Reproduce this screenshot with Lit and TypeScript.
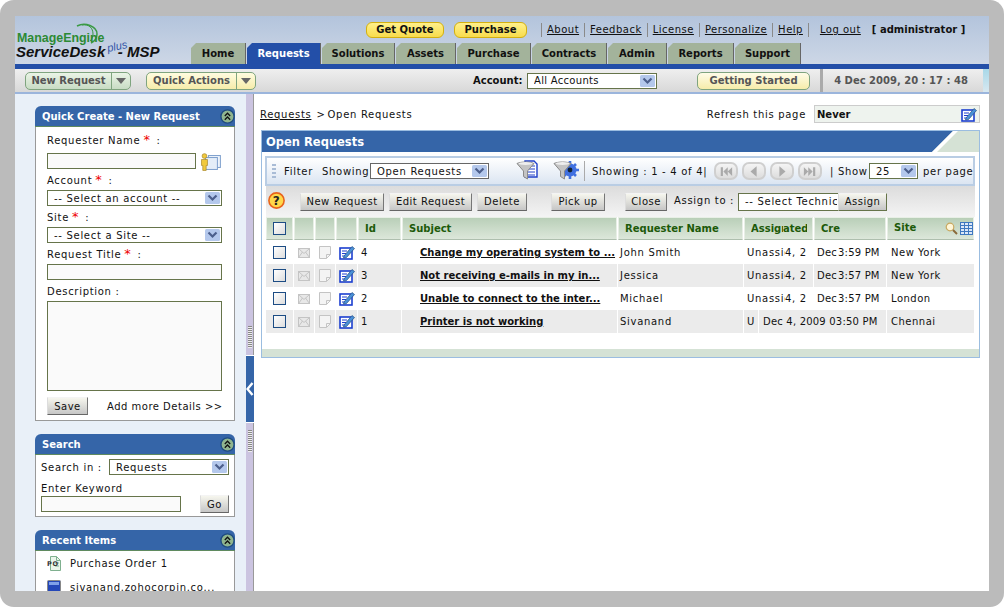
import { LitElement, css, html, svg } from 'lit';
import { customElement } from 'lit/decorators.js';

const TABS = ['Home', 'Requests', 'Solutions', 'Assets', 'Purchase', 'Contracts', 'Admin', 'Reports', 'Support'];
const LINKS = ['About', 'Feedback', 'License', 'Personalize', 'Help'];

const ROWS = [
  { id: 4, subject: 'Change my operating system to ...', name: 'John Smith', time: '3:59 PM', site: 'New York' },
  { id: 3, subject: 'Not receiving e-mails in my in...', name: 'Jessica', time: '3:57 PM', site: 'New York' },
  { id: 2, subject: 'Unable to connect to the inter...', name: 'Michael', time: '3:57 PM', site: 'London' },
  { id: 1, subject: 'Printer is not working', name: 'Sivanand', time: '', site: 'Chennai' },
];

const caret = svg`<svg width="15" height="12" viewBox="0 0 15 12"><rect width="15" height="12" rx="1.5" fill="#b4c8ec"/><path d="M3.5 3.5 7.5 7.5 11.5 3.5" fill="none" stroke="#4c5f8c" stroke-width="2.2"/></svg>`;

const collapse = svg`<svg width="15" height="15" viewBox="0 0 15 15"><circle cx="7.5" cy="7.5" r="6.6" fill="#8fb58f" stroke="#1f4c80" stroke-width="1.4"/><path d="M4.8 7 7.5 4.2 10.2 7M4.8 10.8 7.5 8 10.2 10.8" fill="none" stroke="#111" stroke-width="1.3"/></svg>`;

const mail = svg`<svg width="12" height="10" viewBox="0 0 12 10"><rect x=".5" y=".5" width="11" height="9" fill="#e8e8e8" stroke="#c4c4c4"/><path d="M.5.5 6 5.5 11.5.5M.5 9.5 4.5 4M11.5 9.5 7.5 4" fill="none" stroke="#c4c4c4"/></svg>`;

const note = svg`<svg width="12" height="13" viewBox="0 0 12 13"><path d="M.5.5h11v8l-4 4h-7z" fill="#f4f4f4" stroke="#c4c4c4"/><path d="M7.5 12.5v-4h4" fill="none" stroke="#c4c4c4"/></svg>`;

const editIcon = svg`<svg width="16" height="15" viewBox="0 0 16 15"><rect x="1" y="3" width="12" height="11" fill="#fff" stroke="#1c3fd0" stroke-width="1.6"/><path d="M3 6h5M3 8.5h4M3 11h3" stroke="#1c3fd0"/><path d="M5 11 13 1.5l2.5 2L7.5 12.5 4.5 13z" fill="#4a90d8" stroke="#26507e" stroke-width=".7"/></svg>`;

const funnel = svg`<path d="M1 3.5C5 1.5 14 1.5 18 3.5L11.5 11v8l-4-2.5V11z" fill="#c4c4c4" stroke="#8a8a8a"/><ellipse cx="9.5" cy="3.5" rx="7" ry="1.4" fill="#eee"/>`;

const funnelDoc = svg`<svg width="22" height="21" viewBox="0 0 22 21"><path d="M9 1h9l3 3v13H9z" fill="#fff" stroke="#1f3fc8" stroke-width="1.4"/><path d="M12 6h7M12 9h7M12 12h7M12 15h7" stroke="#1f3fc8"/>${funnel}</svg>`;

const funnelGear = svg`<svg width="26" height="21" viewBox="0 0 26 21"><circle cx="17" cy="10" r="6.5" fill="#3f6fe0"/><path d="M17 1v18M8 10h18M11 4l12 12M23 4 11 16" stroke="#3f6fe0" stroke-width="2.6"/><circle cx="17" cy="10" r="2.4" fill="#123"/>${funnel}</svg>`;

const pickIcon = svg`<svg width="22" height="18" viewBox="0 0 22 18"><rect x="8.5" y="2.5" width="12" height="12" fill="#eef4fb" stroke="#7d9fcd"/><rect x="5.5" y="4.5" width="12" height="12" fill="#e4edf8" stroke="#7d9fcd"/><circle cx="4.5" cy="3" r="2.4" fill="#f0c93c" stroke="#a8872a" stroke-width=".7"/><path d="M1.5 6.5h6v6H6.2v5H2.8v-5H1.5z" fill="#f0c93c" stroke="#a8872a" stroke-width=".7"/></svg>`;

const poIcon = svg`<svg width="14" height="15" viewBox="0 0 14 15"><path d="M3.5.5h6l4 4v10h-10z" fill="#eaf5ea" stroke="#7fb08f"/><path d="M9.5.5v4h4M8 7h4M8 10h4" fill="none" stroke="#7fb08f"/><text x="0" y="10" font-size="6.5" font-family="DejaVu Sans" font-weight="bold" fill="#333">PO</text></svg>`;

const pcIcon = svg`<svg width="14" height="15" viewBox="0 0 14 15"><rect x=".5" y=".5" width="13" height="11" rx="1" fill="#2447b8" stroke="#888"/><rect x="2" y="2" width="10" height="3" fill="#7fa0e8"/><rect x="1" y="12" width="12" height="2.5" fill="#aaa"/></svg>`;

const gridIcon = svg`<svg width="13" height="13" viewBox="0 0 13 13"><rect x=".5" y=".5" width="12" height="12" fill="#dce8f8" stroke="#3f78c0"/><path d="M.5 3.5h12M.5 6.5h12M.5 9.5h12M4.5.5v12M8.5.5v12" stroke="#3f78c0"/></svg>`;

const lens = svg`<svg width="13" height="13" viewBox="0 0 13 13"><circle cx="5" cy="5" r="3.8" fill="#fff6d8" stroke="#c8a860" stroke-width="1.2"/><path d="M8 8l4 4" stroke="#8a6a3a" stroke-width="2"/></svg>`;

const helpIcon = svg`<svg width="17" height="17" viewBox="0 0 17 17"><circle cx="8.5" cy="8.5" r="7.6" fill="#ffd84a" stroke="#e8641c" stroke-width="1.6"/><text x="8.5" y="13" text-anchor="middle" font-size="12" font-weight="bold" font-family="DejaVu Sans" fill="#222">?</text></svg>`;

const navIcons = [
  'M2 1h2.5v10H2zM10 1 5 6l5 5zM15 1l-5 5 5 5z',
  'M11 0 4 6l7 6z',
  'M5 0l7 6-7 6z',
  'M1 1l5 5-5 5zM6 1l5 5-5 5zM11.5 1H14v10h-2.5z',
];

@customElement('app-root')
export class AppRoot extends LitElement {
  static styles = css`
    :host {
      display: block;
      width: 1004px;
      height: 607px;
      background: #fff;
      font-family: 'DejaVu Sans', Verdana, sans-serif;
      font-size: 10px;
      letter-spacing: 0.7px;
      color: #111;
      overflow: hidden;
    }

    .shell {
      height: 607px;
      box-sizing: border-box;
      background: #bbb;
      border-radius: 14px;
      padding: 16px 15px;
    }

    .frame {
      height: 575px;
      background: #fff;
      overflow: hidden;
    }

    .header {
      display: flex;
      height: 48px;
      background: linear-gradient(#b3c4dc, #cdd7e6);
    }

    .logo {
      width: 176px;
      flex: none;
      position: relative;
      letter-spacing: 0;
    }

    .logo svg {
      position: absolute;
      left: 60px;
      top: 6px;
    }

    .me {
      position: absolute;
      left: 2px;
      top: 15px;
      color: #2c8a34;
      font: bold 12.4px 'Liberation Sans', sans-serif;
    }

    .sd {
      position: absolute;
      left: 1px;
      top: 27px;
      font: italic bold 15px 'Liberation Sans', sans-serif;
      color: #111;
      white-space: nowrap;
    }

    .plus {
      position: absolute;
      left: 92px;
      top: 24px;
      color: #3456a8;
      font: italic 11px 'Liberation Sans', sans-serif;
      transform: rotate(-12deg);
    }

    .top {
      display: flex;
      align-items: center;
      height: 27px;
      padding-left: 175px;
      white-space: nowrap;
    }

    .gold {
      height: 16px;
      box-sizing: border-box;
      border: 1px solid #d4b010;
      border-radius: 6px;
      background: linear-gradient(#fff08a, #f8dc4c);
      font-weight: bold;
      font-size: 10px;
      letter-spacing: 0;
      display: flex;
      align-items: center;
      justify-content: center;
    }

    .quote { width: 78px; margin-right: 10px; }
    .buy { width: 73px; margin-right: 14px; }

    .link {
      text-decoration: underline;
      padding: 0 5px;
      border-left: 1px solid #8a8a8a;
      line-height: 14px;
      letter-spacing: 0.5px;
    }

    .sep-end {
      border-left: 1px solid #8a8a8a;
      height: 14px;
      margin-right: 11px;
    }

    .logout { text-decoration: underline; margin-right: 11px; letter-spacing: 0.5px; }
    .who { font-weight: bold; letter-spacing: 0; }

    .tabs {
      display: grid;
      grid-template-columns: 55px 74px 73px 60px 74px 75px 59px 66px 66px;
      column-gap: 1px;
      height: 21px;
    }

    .tab {
      background: #a3b39b;
      border-right: 1px solid #666;
      display: flex;
      align-items: center;
      justify-content: center;
      font-weight: bold;
      font-size: 10px;
      letter-spacing: 0;
      clip-path: polygon(5px 0, 100% 0, 100% 100%, 0 100%, 0 5px);
    }

    .tab.on {
      background: #234fa8;
      color: #fff;
    }

    .strip {
      height: 5px;
      background: #234fa8;
    }

    .sub {
      display: flex;
      align-items: center;
      height: 25px;
      box-sizing: border-box;
      padding-left: 10px;
      background: linear-gradient(#efefef, #d8d8d8);
      border-bottom: 2px solid #9bb5dc;
      white-space: nowrap;
    }

    .pill {
      height: 18px;
      box-sizing: border-box;
      display: flex;
      align-items: center;
      border: 1px solid #7fa47f;
      border-radius: 5px;
      color: #555;
      font-weight: bold;
      font-size: 10px;
      letter-spacing: 0;
    }

    .pill b {
      flex: 1;
      text-align: center;
    }

    .pill i {
      width: 18px;
      height: 100%;
      border-left: 1px solid #7fa47f;
      display: flex;
      align-items: center;
      justify-content: center;
    }

    .pill i::after {
      content: '';
      border: 5px solid transparent;
      border-top: 6px solid #666;
      border-bottom: 0;
    }

    .green { width: 106px; margin-right: 15px; background: linear-gradient(#eaf4e6, #c8dcc4); }
    .cream { width: 110px; margin-right: 217px; background: linear-gradient(#fffce0, #f6ecaa); }
    .start { width: 113px; margin-right: 10px; background: linear-gradient(#fffce8, #f6ecaa); justify-content: center; }

    .acct {
      font-weight: bold;
      letter-spacing: 0;
      margin-right: 3px;
      width: 51px;
    }

    .date {
      width: 163px;
      height: 100%;
      border-left: 3px solid #aaa;
      box-sizing: border-box;
      display: flex;
      align-items: center;
      justify-content: center;
      padding-right: 4px;
      color: #555;
      font-weight: bold;
      letter-spacing: 0;
    }

    .edge {
      flex: 1;
      height: 100%;
      background: linear-gradient(#a8d8e8, #d8e8f0);
    }

    .select {
      height: 16px;
      box-sizing: border-box;
      border: 1px solid #66744a;
      background: #fff;
      display: flex;
      align-items: center;
      padding: 0 1px 0 6px;
      white-space: nowrap;
      flex: none;
    }

    .select span {
      flex: 1;
      overflow: hidden;
    }

    .select svg { flex: none; }

    .w-acct { width: 130px; margin-right: 40px; }
    .w-acct span { letter-spacing: 0.3px; }

    .body {
      display: flex;
      height: 497px;
    }

    .side {
      width: 231px;
      flex: none;
      box-sizing: border-box;
      padding: 12px 11px 0 20px;
      background: #e9f0f8;
      overflow: hidden;
    }

    .box {
      margin-bottom: 13px;
    }

    .box-head {
      height: 21px;
      background: #3565a8;
      border-radius: 6px 6px 0 0;
      border-bottom: 1px solid #5f8a5f;
      box-sizing: border-box;
      color: #fff;
      font-weight: bold;
      letter-spacing: 0;
      display: flex;
      align-items: center;
      justify-content: space-between;
      padding: 0 0 0 7px;
    }

    .box-body {
      background: #fff;
      border: 1px solid #999;
      border-top: 0;
      box-sizing: border-box;
    }

    .quick { height: 294px; padding: 6px 12px 0 11px; }
    .finder { height: 62px; padding: 4px 5px 0 5px; }
    .recent { height: 60px; padding: 0 0 0 11px; }

    .lbl {
      height: 14px;
      line-height: 16px;
      margin-bottom: 3px;
      white-space: nowrap;
    }

    .lbl em {
      color: #e00;
      font-style: normal;
      font-size: 13px;
      margin: 0 6px 0 3px;
      line-height: 10px;
    }

    .field { margin-bottom: 4px; }

    .text {
      display: block;
      height: 16px;
      box-sizing: border-box;
      border: 1px solid #66744a;
      background: #fafafa;
    }

    .name-row {
      display: flex;
      gap: 4px;
      align-items: flex-start;
      height: 16px;
      margin-bottom: 4px;
      margin-top: 6px;
    }

    .name-row .text { width: 150px; }
    .area { height: 90px; margin-bottom: 6px; }

    .btn {
      height: 18px;
      box-sizing: border-box;
      border: 1px solid;
      border-color: #f4f4f4 #777 #666 #ddd;
      background: linear-gradient(#f6f6ee, #c6c6c6);
      display: flex;
      align-items: center;
      justify-content: center;
      white-space: nowrap;
      flex: none;
      letter-spacing: 0.5px;
    }

    .save-row {
      display: flex;
      align-items: center;
      letter-spacing: 0.5px;
      white-space: nowrap;
    }

    .save { width: 41px; margin-right: 19px; }

    .find-row {
      display: flex;
      align-items: center;
      height: 16px;
      margin-bottom: 8px;
    }

    .find-row span.in { width: 68px; }
    .w-find { width: 120px; }
    .key { line-height: 12px; }

    .go-row {
      display: flex;
      align-items: flex-start;
      justify-content: space-between;
    }

    .go-row .text { width: 140px; margin-top: 1px; }
    .go { width: 29px; }

    .item {
      display: flex;
      align-items: center;
      gap: 9px;
      height: 24px;
      white-space: nowrap;
    }

    .split {
      width: 8px;
      flex: none;
      box-sizing: border-box;
      background: #cbc4e0;
      border-right: 1px solid #999;
      display: flex;
      flex-direction: column;
      align-items: center;
      padding-top: 232px;
    }

    .grip {
      width: 4px;
      height: 22px;
      background: repeating-linear-gradient(#888 0 1px, #eee 1px 2px);
    }

    .handle {
      width: 8px;
      height: 66px;
      margin: 7px 0;
      background: #3565a8;
      border-top: 1px solid #fff;
      border-bottom: 1px solid #fff;
      display: flex;
      align-items: center;
      flex: none;
    }

    .main {
      flex: 1;
      min-width: 0;
      padding: 0 9px 0 7px;
    }

    .crumb {
      display: flex;
      align-items: center;
      height: 36px;
      box-sizing: border-box;
      padding: 4px 0 0 0;
      margin-left: -1px;
      white-space: nowrap;
    }

    .crumb u { margin-right: 5px; }
    .crumb .gap { margin: 0 2px 0 0; }
    .refresh { margin-left: auto; margin-right: 8px; }

    .never {
      width: 166px;
      height: 18px;
      box-sizing: border-box;
      border: 1px solid #ccc;
      background: #eef3ee;
      font-weight: bold;
      letter-spacing: 0;
      display: flex;
      align-items: center;
      justify-content: space-between;
      padding: 0 2px;
    }

    .panel {
      border: 1px solid #9bbde0;
      height: 228px;
      box-sizing: border-box;
      position: relative;
    }

    .title {
      height: 21px;
      background: #3565a8;
      color: #fff;
      font-weight: bold;
      font-size: 11.5px;
      letter-spacing: 0;
      display: flex;
      align-items: center;
      justify-content: space-between;
      padding-left: 4px;
    }

    .title svg { flex: none; }

    .inner { padding: 4px 4px 0 3px; }

    .bar {
      display: flex;
      align-items: center;
      height: 30px;
      box-sizing: border-box;
      border: 2px solid #b9cde4;
      background: linear-gradient(#fff, #dbe5f2);
      white-space: nowrap;
      overflow: hidden;
    }

    .dots {
      width: 4px;
      height: 14px;
      margin: 0 8px 0 5px;
      background: repeating-linear-gradient(#a9bcd6 0 2px, transparent 2px 4px);
      flex: none;
    }

    .bar .filter { width: 38px; flex: none; }
    .bar .showing { width: 48px; flex: none; }
    .w-open { width: 119px; margin-right: 27px; border-color: #666; }
    .fun1 { margin-right: 15px; flex: none; }
    .fun2 { margin-right: 5px; flex: none; }

    .vr {
      width: 1px;
      height: 20px;
      background: #aaa;
      margin-right: 7px;
      flex: none;
    }

    .count { width: 122px; flex: none; }

    .nav {
      width: 24px;
      height: 18px;
      box-sizing: border-box;
      margin-right: 4px;
      border: 2px solid #cfcfcf;
      border-radius: 7px;
      background: linear-gradient(#f4f4f4, #ddd);
      display: flex;
      align-items: center;
      justify-content: center;
      flex: none;
    }

    .show { margin: 0 0 0 4px; width: 39px; flex: none; }
    .w-page { width: 49px; margin-right: 5px; }

    .acts {
      display: flex;
      align-items: center;
      height: 31px;
      margin-left: 1px;
      padding-left: 2px;
      background: linear-gradient(#dcdcdc, #f4f4f4);
      white-space: nowrap;
    }

    .help { margin-right: 15px; flex: none; }
    .a1 { width: 84px; margin-right: 5px; }
    .a2 { width: 83px; margin-right: 5px; }
    .a3 { width: 50px; margin-right: 24px; }
    .a4 { width: 54px; margin-right: 20px; }
    .a5 { width: 42px; margin-right: 7px; }
    .assign-label { width: 64px; flex: none; margin-top: -2px; }
    .w-tech { width: 100px; height: 18px; border-right: 0; }
    .a6 { width: 49px; border-right-color: #66744a; border-bottom-color: #66744a; }

    .row {
      display: grid;
      grid-template-columns: 27px 20px 20px 21px 43px 215px 125px 69px 72px 87px;
      column-gap: 1px;
      height: 23px;
      margin-left: 1px;
    }

    .row.head { margin-bottom: 1px; }

    .row.alt .c { background: #ebebeb; }
    .row.wide { grid-template-columns: 27px 20px 20px 21px 43px 215px 125px 14px 127px 87px; }

    .c {
      display: flex;
      align-items: center;
      overflow: hidden;
      white-space: nowrap;
      padding-left: 2px;
      min-width: 0;
    }

    .c.icon {
      justify-content: center;
      padding-left: 0;
    }

    .c.num { padding-left: 3px; }
    .c.site { padding-left: 4px; letter-spacing: 0.5px; }
    .c.full { padding-left: 4px; letter-spacing: 0.2px; }
    .c.time { letter-spacing: 0.2px; }

    .h {
      display: flex;
      align-items: center;
      overflow: hidden;
      white-space: nowrap;
      background: linear-gradient(#b9cfb8, #dce7da);
      border: 1px solid #e8efe6;
      border-bottom-color: #aebfae;
      box-sizing: border-box;
      color: #1d5a0a;
      font-weight: bold;
      letter-spacing: 0;
      padding-left: 6px;
    }

    .h.icon {
      justify-content: center;
      padding-left: 0;
    }

    .h .tools {
      margin-left: auto;
      display: flex;
      gap: 2px;
    }

    .h .up { margin-top: -3px; }

    .tick {
      width: 13px;
      height: 13px;
      box-sizing: border-box;
      border: 1px solid #1c4c84;
      background: linear-gradient(135deg, #fff, #ddd);
    }

    .subject {
      padding-left: 18px;
      font-weight: bold;
      letter-spacing: 0;
      text-decoration: underline;
    }

    .cut {
      display: inline-block;
      overflow: hidden;
      flex: none;
    }

    .cut-head1 { width: 32px; }
    .cut-head2 { width: 24px; }
    .cut1 { width: 38px; }
    .cut2 { width: 21px; }
    .cut3 { width: 21px; }

    .foot {
      position: absolute;
      left: 0;
      right: 0;
      bottom: 0;
      height: 8px;
      background: #d5e2d5;
    }
  `;

  private selectBox(text: string, cls: string) {
    return html`<div class="select ${cls}"><span>${text}</span>${caret}</div>`;
  }

  private renderHeader() {
    return html`
      <div class="header">
        <div class="logo">
          <svg width="26" height="24" viewBox="0 0 26 24">
            <path d="M2 4C10 0 22 4 22 12c0 4-2 7-6 9" fill="none" stroke="#3a9a44" stroke-width="1.5" />
            <path d="M7 3c7-1 11 3 11 9 0 3-1 5-3 7" fill="none" stroke="#3a9a44" />
          </svg>
          <span class="me">ManageEngine</span>
          <span class="sd">ServiceDesk&nbsp;&nbsp;&nbsp;- MSP</span>
          <span class="plus">plus</span>
        </div>
        <div>
          <div class="top">
            <div class="gold quote">Get Quote</div>
            <div class="gold buy">Purchase</div>
            ${LINKS.map((l) => html`<span class="link">${l}</span>`)}
            <span class="sep-end"></span>
            <span class="logout">Log out</span>
            <span class="who">[ administrator ]</span>
          </div>
          <div class="tabs">
            ${TABS.map((t) => html`<div class="tab ${t === 'Requests' ? 'on' : ''}">${t}</div>`)}
          </div>
        </div>
      </div>
      <div class="strip"></div>
      <div class="sub">
        <div class="pill green"><b>New Request</b><i></i></div>
        <div class="pill cream"><b>Quick Actions</b><i></i></div>
        <span class="acct">Account:</span>
        ${this.selectBox('All Accounts', 'w-acct')}
        <div class="pill start">Getting Started</div>
        <div class="date">4 Dec 2009, 20 : 17 : 48</div>
        <div class="edge"></div>
      </div>
    `;
  }

  private renderSide() {
    return html`
      <div class="side">
        <div class="box">
          <div class="box-head">Quick Create - New Request ${collapse}</div>
          <div class="box-body quick">
            <div class="lbl">Requester Name<em>*</em>:</div>
            <div class="name-row"><div class="text"></div>${pickIcon}</div>
            <div class="lbl">Account<em>*</em>:</div>
            <div class="field">${this.selectBox('-- Select an account --', '')}</div>
            <div class="lbl">Site<em>*</em>:</div>
            <div class="field">${this.selectBox('-- Select a Site --', '')}</div>
            <div class="lbl">Request Title<em>*</em>:</div>
            <div class="text field"></div>
            <div class="lbl">Description :</div>
            <div class="text area"></div>
            <div class="save-row">
              <div class="btn save">Save</div>
              <span>Add more Details &gt;&gt;</span>
            </div>
          </div>
        </div>
        <div class="box">
          <div class="box-head">Search ${collapse}</div>
          <div class="box-body finder">
            <div class="find-row"><span class="in">Search in :</span>${this.selectBox('Requests', 'w-find')}</div>
            <div class="key">Enter Keyword</div>
            <div class="go-row"><div class="text"></div><div class="btn go">Go</div></div>
          </div>
        </div>
        <div class="box">
          <div class="box-head">Recent Items ${collapse}</div>
          <div class="box-body recent">
            <div class="item">${poIcon}<span>Purchase Order 1</span></div>
            <div class="item">${pcIcon}<span>sivanand.zohocorpin.co...</span></div>
          </div>
        </div>
      </div>
    `;
  }

  private renderTable() {
    return html`
      <div class="row head">
        <div class="h icon"><div class="tick"></div></div>
        <div class="h"></div>
        <div class="h"></div>
        <div class="h"></div>
        <div class="h">Id</div>
        <div class="h">Subject</div>
        <div class="h">Requester Name</div>
        <div class="h"><span class="cut cut-head1">Assigned</span><span class="cut cut-head2">ated</span></div>
        <div class="h">Cre</div>
        <div class="h"><span class="up">Site</span><span class="tools">${lens}${gridIcon}</span></div>
      </div>
      ${ROWS.map(
        (r, i) => html`
          <div class="row ${i % 2 ? 'alt' : ''} ${r.time ? '' : 'wide'}">
            <div class="c icon"><div class="tick"></div></div>
            <div class="c icon">${mail}</div>
            <div class="c icon">${note}</div>
            <div class="c icon">${editIcon}</div>
            <div class="c num">${r.id}</div>
            <div class="c subject">${r.subject}</div>
            <div class="c">${r.name}</div>
            ${r.time
              ? html`
                  <div class="c num"><span class="cut cut1">Unassigned</span><span class="cut cut2">4, 2009</span></div>
                  <div class="c num time"><span class="cut cut3">Dec 4</span><span>${r.time}</span></div>
                `
              : html`
                  <div class="c num"><span class="cut">U</span></div>
                  <div class="c full">Dec 4, 2009 03:50 PM</div>
                `}
            <div class="c site">${r.site}</div>
          </div>
        `,
      )}
    `;
  }

  private renderMain() {
    return html`
      <div class="main">
        <div class="crumb">
          <u>Requests</u><span class="gap">&gt;</span><span>Open Requests</span>
          <span class="refresh">Refresh this page</span>
          <div class="never">Never ${editIcon}</div>
        </div>
        <div class="panel">
          <div class="title">
            Open Requests
            <svg width="47" height="21" viewBox="0 0 47 21">
              <rect width="47" height="21" fill="#d5e2d5" />
              <path d="M0 0H21L0 21Z" fill="#3565a8" />
              <path d="M21 0H26L5 21H0Z" fill="#fff" />
            </svg>
          </div>
          <div class="inner">
            <div class="bar">
              <div class="dots"></div>
              <span class="filter">Filter</span>
              <span class="showing">Showing</span>
              ${this.selectBox('Open Requests', 'w-open')}
              <span class="fun1">${funnelDoc}</span>
              <span class="fun2">${funnelGear}</span>
              <div class="vr"></div>
              <span class="count">Showing : 1 - 4 of 4|</span>
              ${navIcons.map(
                (d) => html`<div class="nav">
                  <svg width="14" height="11" viewBox="0 0 16 12"><path d=${d} fill="#aaa" /></svg>
                </div>`,
              )}
              <span class="show">| Show</span>
              ${this.selectBox('25', 'w-page')}
              <span>per page</span>
            </div>
            <div class="acts">
              <span class="help">${helpIcon}</span>
              <div class="btn a1">New Request</div>
              <div class="btn a2">Edit Request</div>
              <div class="btn a3">Delete</div>
              <div class="btn a4">Pick up</div>
              <div class="btn a5">Close</div>
              <span class="assign-label">Assign to :</span>
              <div class="select w-tech"><span>-- Select Technician --</span></div>
              <div class="btn a6">Assign</div>
            </div>
            ${this.renderTable()}
          </div>
          <div class="foot"></div>
        </div>
      </div>
    `;
  }

  render() {
    return html`
      <div class="shell">
        <div class="frame">
          ${this.renderHeader()}
          <div class="body">
            ${this.renderSide()}
            <div class="split">
              <div class="grip"></div>
              <div class="handle">
                <svg width="8" height="14" viewBox="0 0 8 14"><path d="M6.5 1 1.5 7l5 6" fill="none" stroke="#fff" stroke-width="2.4" /></svg>
              </div>
              <div class="grip"></div>
            </div>
            ${this.renderMain()}
          </div>
        </div>
      </div>
    `;
  }
}

declare global {
  interface HTMLElementTagNameMap {
    'app-root': AppRoot;
  }
}
